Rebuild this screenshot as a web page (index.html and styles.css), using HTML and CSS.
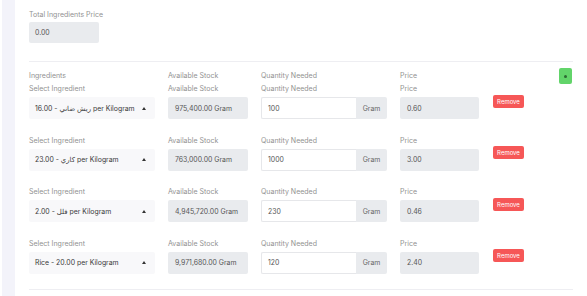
FILE: index.html
```html
<!DOCTYPE html>
<html lang="en">
<head>
<meta charset="utf-8">
<title>Ingredients</title>
<link rel="stylesheet" href="styles.css">
</head>
<body>
<div class="page">
  <aside class="sidebar"></aside>
  <main class="main">
    <section class="total">
      <label class="lbl">Total Ingredients Price</label>
      <div class="box total-box">0.00</div>
    </section>
    <section class="ingredients">
      <div class="grid head">
        <span class="lbl">Ingredients</span>
        <span class="lbl">Available Stock</span>
        <span class="lbl">Quantity Needed</span>
        <span class="lbl">Price</span>
        <span class="add-cell"><button class="add"><span class="add-dot"></span></button></span>
      </div>

      <div class="grid row">
        <div class="field"><span class="lbl">Select Ingredient</span><div class="select"><span class="sel-text">ريش ضاني - 16.00 per Kilogram</span><span class="caret"></span></div></div>
        <div class="field"><span class="lbl">Available Stock</span><div class="box">975,400.00 Gram</div></div>
        <div class="field"><span class="lbl">Quantity Needed</span><div class="group"><div class="input">100</div><div class="addon">Gram</div></div></div>
        <div class="field"><span class="lbl">Price</span><div class="box">0.60</div></div>
        <div class="rm-cell"><button class="remove">Remove</button></div>
      </div>

      <div class="grid row">
        <div class="field"><span class="lbl">Select Ingredient</span><div class="select"><span class="sel-text">كاري - 23.00 per Kilogram</span><span class="caret"></span></div></div>
        <div class="field"><span class="lbl">Available Stock</span><div class="box">763,000.00 Gram</div></div>
        <div class="field"><span class="lbl">Quantity Needed</span><div class="group"><div class="input">1000</div><div class="addon">Gram</div></div></div>
        <div class="field"><span class="lbl">Price</span><div class="box">3.00</div></div>
        <div class="rm-cell"><button class="remove">Remove</button></div>
      </div>

      <div class="grid row">
        <div class="field"><span class="lbl">Select Ingredient</span><div class="select"><span class="sel-text">فلل - 2.00 per Kilogram</span><span class="caret"></span></div></div>
        <div class="field"><span class="lbl">Available Stock</span><div class="box">4,945,720.00 Gram</div></div>
        <div class="field"><span class="lbl">Quantity Needed</span><div class="group"><div class="input">230</div><div class="addon">Gram</div></div></div>
        <div class="field"><span class="lbl">Price</span><div class="box">0.46</div></div>
        <div class="rm-cell"><button class="remove">Remove</button></div>
      </div>

      <div class="grid row">
        <div class="field"><span class="lbl">Select Ingredient</span><div class="select"><span class="sel-text">Rice - 20.00 per Kilogram</span><span class="caret"></span></div></div>
        <div class="field"><span class="lbl">Available Stock</span><div class="box">9,971,680.00 Gram</div></div>
        <div class="field"><span class="lbl">Quantity Needed</span><div class="group"><div class="input">120</div><div class="addon">Gram</div></div></div>
        <div class="field"><span class="lbl">Price</span><div class="box">2.40</div></div>
        <div class="rm-cell"><button class="remove">Remove</button></div>
      </div>
    </section>
  </main>
</div>
</body>
</html>
```
FILE: styles.css
```css
* { box-sizing: border-box; }
html, body { margin: 0; padding: 0; background: #fff; }
body {
  font-family: Inter, "Noto Sans", "DejaVu Sans", sans-serif;
  color: #555;
  font-size: 7px;
  overflow: hidden;
}
.page {
  display: flex;
  height: 296px;
  padding-left: 2px;
}
.sidebar {
  width: 13px;
  background: #f3f3fa;
  flex: none;
}
.main {
  flex: none;
  width: 544px;
  margin-left: 14px;
  padding-top: 9.5px;
}
.lbl {
  display: block;
  font-size: 7px;
  line-height: 10px;
  color: #929292;
  white-space: nowrap;
}
.total .lbl { margin-bottom: 2.5px; }
.box {
  height: 22px;
  background: #e9ebee;
  border-radius: 2px;
  display: flex;
  align-items: center;
  padding-left: 7px;
  font-size: 6.9px;
  color: #555;
  white-space: nowrap;
}
.total-box {
  width: 70px;
  height: 21px;
  padding-left: 6px;
}
.ingredients {
  margin-top: 18px;
  border-top: 1px solid #eeeef2;
  border-bottom: 1px solid #eeeef2;
  padding-top: 9px;
  padding-bottom: 15px;
}
.grid {
  display: grid;
  grid-template-columns: 126px 80px 126px 79px 1fr;
  column-gap: 13px;
}
.head {
  height: 13px;
}
.add-cell {
  display: flex;
  justify-content: flex-end;
  padding-right: 1px;
}
.add {
  margin-top: -3px;
  width: 13px;
  height: 16px;
  border: 0;
  padding: 0;
  border-radius: 2px;
  background: #62d46a;
  display: flex;
  align-items: center;
  justify-content: center;
}
.add-dot {
  width: 3px;
  height: 3px;
  border-radius: 50%;
  background: #2d6a33;
}
.row + .row { margin-top: 16.5px; }
.field .lbl { margin-bottom: 3px; }
.select {
  height: 22px;
  background: #f8f8fa;
  border-radius: 2px;
  display: flex;
  align-items: center;
  justify-content: space-between;
  padding: 0 9px 0 6px;
  font-size: 6.9px;
  color: #3a3a3a;
  white-space: nowrap;
}
.caret {
  width: 0;
  height: 0;
  border-left: 2px solid transparent;
  border-right: 2px solid transparent;
  border-bottom: 3px solid #333;
}
.group {
  display: flex;
  height: 22px;
}
.input {
  flex: 1;
  background: #fff;
  border: 1px solid #e6e7ea;
  border-right: 0;
  border-radius: 2px 0 0 2px;
  display: flex;
  align-items: center;
  padding-left: 6px;
  font-size: 6.9px;
  color: #555;
}
.addon {
  width: 31px;
  background: #e9ebee;
  border-radius: 0 2px 2px 0;
  display: flex;
  align-items: center;
  justify-content: center;
  font-size: 6.9px;
  color: #666;
}
.rm-cell {
  padding-top: 10.5px;
  padding-left: 1px;
}
.remove {
  width: 31px;
  height: 13px;
  border: 0;
  padding: 0;
  border-radius: 2px;
  background: #f65757;
  color: #fff;
  font-family: inherit;
  font-size: 6px;
  line-height: 13px;
}
```
